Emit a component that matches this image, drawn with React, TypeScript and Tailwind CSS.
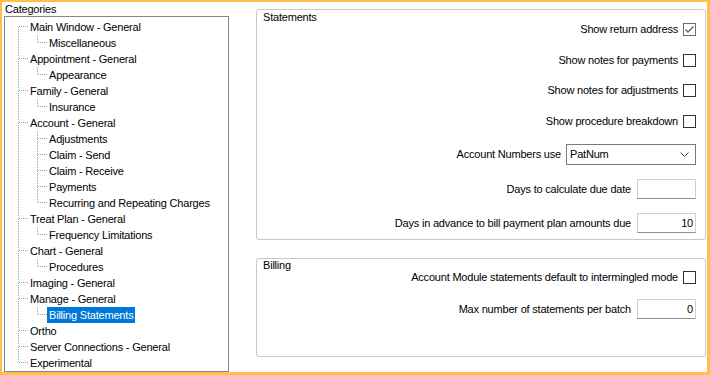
type TreeNode = { label: string; children?: string[]; selected?: string };

const tree: TreeNode[] = [
  { label: "Main Window - General", children: ["Miscellaneous"] },
  { label: "Appointment - General", children: ["Appearance"] },
  { label: "Family - General", children: ["Insurance"] },
  {
    label: "Account - General",
    children: ["Adjustments", "Claim - Send", "Claim - Receive", "Payments", "Recurring and Repeating Charges"],
  },
  { label: "Treat Plan - General", children: ["Frequency Limitations"] },
  { label: "Chart - General", children: ["Procedures"] },
  { label: "Imaging - General" },
  { label: "Manage - General", children: ["Billing Statements"], selected: "Billing Statements" },
  { label: "Ortho" },
  { label: "Server Connections - General" },
  { label: "Experimental" },
];

const dot = { stroke: "#a0a0a0", strokeWidth: 1, strokeDasharray: "1 1" };

function RootRow({ label, first, last }: { label: string; first: boolean; last: boolean }) {
  return (
    <div className="flex h-[16px]">
      <svg width="23" height="16" className="shrink-0">
        <line x1="13.5" y1={first ? 8 : 0} x2="13.5" y2={last ? 8 : 16} style={dot} />
        <line x1="14" y1="7.5" x2="23" y2="7.5" style={dot} />
      </svg>
      <span className="px-[2px] h-[16px] leading-[17px] whitespace-nowrap">{label}</span>
    </div>
  );
}

function ChildRow({ label, lastChild, selected }: { label: string; lastChild: boolean; selected: boolean }) {
  return (
    <div className="flex h-[16px]">
      <svg width="42" height="16" className="shrink-0">
        <line x1="13.5" y1="0" x2="13.5" y2="16" style={dot} />
        <line x1="32.5" y1="0" x2="32.5" y2={lastChild ? 8 : 16} style={dot} />
        <line x1="33" y1="7.5" x2="42" y2="7.5" style={dot} />
      </svg>
      <span
        className={
          selected
            ? "px-[2px] h-[16px] leading-[17px] whitespace-nowrap bg-[#0078d7] text-white"
            : "px-[2px] h-[16px] leading-[17px] whitespace-nowrap"
        }
      >
        {label}
      </span>
    </div>
  );
}

function CheckBox({ checked }: { checked?: boolean }) {
  return (
    <div
      className={
        checked
          ? "w-[13px] h-[13px] border border-[#6d6d6d] bg-white shrink-0 flex items-center justify-center"
          : "w-[13px] h-[13px] border border-[#333333] bg-white shrink-0"
      }
    >
      {checked && (
        <svg width="11" height="11" viewBox="0 0 11 11">
          <polyline points="1.5,5.5 4,8 9.5,2.5" fill="none" stroke="#606060" strokeWidth="1.3" />
        </svg>
      )}
    </div>
  );
}

function CheckRow({ label, checked, className }: { label: string; checked?: boolean; className?: string }) {
  return (
    <div className={`flex items-center justify-end gap-[5px] h-[13px] ${className ?? ""}`}>
      <span className="leading-[13px] whitespace-nowrap">{label}</span>
      <CheckBox checked={checked} />
    </div>
  );
}

function TextRow({ label, value, className }: { label: string; value?: string; className?: string }) {
  return (
    <div className={`flex items-center justify-end gap-[6px] ${className ?? ""}`}>
      <span className="whitespace-nowrap">{label}</span>
      <div className="w-[59px] h-[20px] border border-[#cfcfcf] border-b-[#8f8f8f] bg-white flex items-center justify-end pr-[2px]">
        {value}
      </div>
    </div>
  );
}

export default function App() {
  return (
    <div
      className="w-[710px] h-[375px] overflow-hidden bg-white border-l-2 border-t-2 border-r-[3px] border-b-[3px] border-[#ffc04a] flex text-[11px] tracking-[-0.2px] text-black"
      style={{ fontFamily: '"Liberation Sans", Arial, sans-serif' }}
    >
      <div className="w-[234px] shrink-0 flex flex-col">
        <div className="pl-[3px] h-[15px] leading-[14px]">Categories</div>
        <div className="ml-[2px] w-[225px] h-[400px] border border-[#828790] bg-white pt-[2px] flex flex-col">
          {tree.map((node, i) => (
            <div key={node.label} className="flex flex-col">
              <RootRow label={node.label} first={i === 0} last={i === tree.length - 1} />
              {node.children?.map((c, j) => (
                <ChildRow
                  key={c}
                  label={c}
                  lastChild={j === node.children!.length - 1}
                  selected={node.selected === c}
                />
              ))}
            </div>
          ))}
        </div>
      </div>

      <div className="flex-1 flex flex-col pl-[20px] pt-[7px]">
        <div className="w-[450px] h-[231px] border border-[#c8c8c8] rounded-[3px] flex flex-col pr-[9px]">
          <div className="pl-[6px] h-[13px] leading-[14px]">Statements</div>
          <CheckRow label="Show return address" checked />
          <CheckRow label="Show notes for payments" className="mt-[18px]" />
          <CheckRow label="Show notes for adjustments" className="mt-[17px]" />
          <CheckRow label="Show procedure breakdown" className="mt-[18px]" />
          <div className="flex items-center justify-end gap-[5px] mt-[16px]">
            <span className="whitespace-nowrap">Account Numbers use</span>
            <div className="w-[130px] h-[21px] border border-[#7a7a7a] bg-white flex items-center justify-between pl-[3px] pr-[6px]">
              <span>PatNum</span>
              <svg width="9" height="6" viewBox="0 0 9 6">
                <polyline points="0.5,0.5 4.5,4.5 8.5,0.5" fill="none" stroke="#444" strokeWidth="1" />
              </svg>
            </div>
          </div>
          <TextRow label="Days to calculate due date" className="mt-[14px]" />
          <TextRow label="Days in advance to bill payment plan amounts due" value="10" className="mt-[14px]" />
        </div>

        <div className="w-[450px] h-[99px] mt-[18px] border border-[#c8c8c8] rounded-[3px] flex flex-col pr-[9px]">
          <div className="pl-[6px] h-[12px] leading-[13px]">Billing</div>
          <CheckRow label="Account Module statements default to intermingled mode" />
          <TextRow label="Max number of statements per batch" value="0" className="mt-[15px]" />
        </div>
      </div>
    </div>
  );
}
